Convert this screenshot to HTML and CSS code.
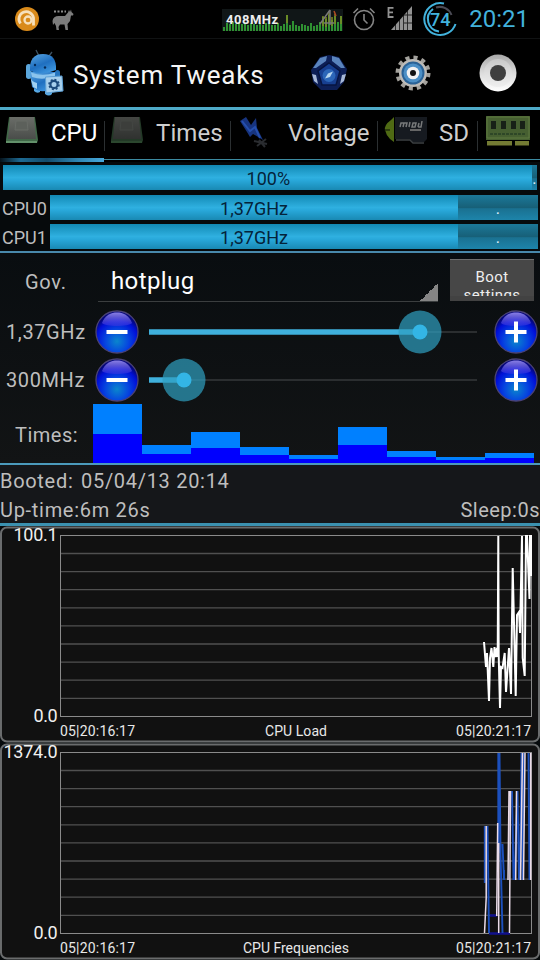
FILE: index.html
```html
<!DOCTYPE html>
<html lang="en">
<head>
  <meta charset="UTF-8">
  <meta name="viewport" content="width=device-width, initial-scale=1.0">
  <title>System Tweaks</title>
  <link rel="stylesheet" href="styles.css">
</head>
<body>

  <!-- shared gradients and the round buttons -->
  <svg class="defs" width="0" height="0">
    <defs>
      <radialGradient id="ball" cx="50%" cy="72%" r="62%">
        <stop offset="0" stop-color="#0a86cc"/>
        <stop offset="0.45" stop-color="#0645e0"/>
        <stop offset="0.8" stop-color="#0010d8"/>
        <stop offset="1" stop-color="#04067c"/>
      </radialGradient>
      <linearGradient id="shine" x1="0" y1="0" x2="0" y2="1">
        <stop offset="0" stop-color="#8a80e4"/>
        <stop offset="1" stop-color="#4038e0" stop-opacity="0.5"/>
      </linearGradient>
      <linearGradient id="robot" x1="0" y1="0" x2="0.6" y2="1">
        <stop offset="0" stop-color="#5aa6e2"/>
        <stop offset="0.6" stop-color="#1f6fc0"/>
        <stop offset="1" stop-color="#3b93dc"/>
      </linearGradient>
      <linearGradient id="silver" x1="0" y1="0" x2="0" y2="1">
        <stop offset="0" stop-color="#a8a8a8"/>
        <stop offset="0.5" stop-color="#dcdcdc"/>
        <stop offset="1" stop-color="#ffffff"/>
      </linearGradient>
      <linearGradient id="chip" x1="0" y1="0" x2="0" y2="1">
        <stop offset="0" stop-color="#6a6d68"/>
        <stop offset="1" stop-color="#4a4d4a"/>
      </linearGradient>
      <symbol id="round" viewBox="0 0 44 44">
        <circle cx="22" cy="22" r="21" fill="url(#ball)" stroke="#4a4276" stroke-width="1.3"/>
        <path d="M7 13C10 5 16 2.500 22 2.500S34 5 37 13C34 17 10 17 7 13Z" fill="url(#shine)"/>
      </symbol>
    </defs>
  </svg>

  <div class="status-bar">
    <div class="status-left">
      <svg width="24" height="24" viewBox="0 0 24 24">
        <circle cx="12" cy="12" r="12" fill="#d98a1a"/>
        <path d="M5.500 16.500A7.300 7.300 0 1 1 18.500 11V18.500" fill="none" stroke="#f6e0bc" stroke-width="2.800"/>
        <circle cx="13" cy="13" r="3.500" fill="none" stroke="#f6e0bc" stroke-width="2.300"/>
      </svg>
      <svg width="22" height="22" viewBox="0 0 22 22">
        <path d="M0.500 12C1 8 4 6.500 8 7L13 7L16 3.500L17 1L18 3L19 0.500L19.500 3L21.500 5L21 6.500H19L18 12L15.500 15L16 21H13.500L12.500 15.500H8L6.500 18L7 21H4.500L4 17L2.500 14L1 16Z" fill="#7c7c7c"/>
        <path d="M2 2.500H14" stroke="#8c8c8c" stroke-width="2" stroke-dasharray="2 1.500"/>
      </svg>
    </div>
    <div class="status-right">
      <div class="freq">
        <svg width="121" height="22" viewBox="0 0 121 22">
          <rect width="121" height="22" fill="#101617"/>
          <path d="M2 22V18M5 22V14M8 22V15M11 22V13M14 22V15M17 22V13M20 22V15M23 22V14M26 22V16M29 22V14M32 22V15M35 22V16M38 22V14M41 22V16M44 22V14M47 22V15M50 22V16M53 22V16M56 22V14M59 22V17M62 22V15M65 22V6M68 22V16M71 22V12M74 22V16M77 22V17M80 22V15M83 22V16M86 22V17M89 22V14M92 22V17M95 22V16M98 22V13M101 22V8M104 22V10M107 22V6M110 22V11M113 22V7M116 22V13M119 22V7" stroke="#2f9132" stroke-width="2"/>
          <path d="M65 14V6M101 17V7M104 18V8M107 14V2M110 17V8M113 15V5M119 15V7" stroke="#7f8a25" stroke-width="1.500"/>
          <path d="M98 15L108 1M102 14H112M108 1V16" stroke="#777" stroke-width="1.500" fill="none"/>
          <path d="M112 2L114 7" stroke="#b04a22" stroke-width="1.500"/>
        </svg>
        <span>408MHz</span>
      </div>
      <svg class="alarm" width="24" height="24" viewBox="0 0 24 24">
        <circle cx="12" cy="13" r="9.500" fill="none" stroke="#858585" stroke-width="1.600"/>
        <path d="M12 7V13L15.500 16.500M1.500 6L6 1.500M18 1.500L22.500 6" fill="none" stroke="#858585" stroke-width="1.600"/>
      </svg>
      <svg class="signal" width="26" height="25" viewBox="0 0 26 25">
        <path d="M25 0V24H4Z" fill="#929292"/>
        <path d="M8.500 10V24M12.500 8V24M16.500 6V24M20.500 0V24" stroke="#000" stroke-width="0.700"/>
        <path d="M17 9H25M17 17H25" stroke="#222" stroke-width="1"/>
        <path d="M6.500 1.800H1.500V11H6.500M1.500 6.300H6" fill="none" stroke="#929292" stroke-width="1.800"/>
      </svg>
      <div class="battery">
        <svg width="36" height="36" viewBox="0 0 36 36">
          <path d="M22 2.500A16 16 0 1 0 33.500 23" fill="none" stroke="#42b2dc" stroke-width="2"/>
          <path d="M11 8A12.500 12.500 0 0 0 17 30.500" fill="none" stroke="#42b2dc" stroke-width="2"/>
          <path d="M14 6.500A12.500 12.500 0 0 1 29.500 14" fill="none" stroke="#4b4b55" stroke-width="2"/>
        </svg>
        <span>74</span>
      </div>
      <span class="clock">20:21</span>
    </div>
  </div>

  <div class="title-bar">
    <svg width="40" height="50" viewBox="0 0 40 50">
      <path d="M14 8L11 2M24 8L27 4" stroke="#3d5363" stroke-width="1.300"/>
      <rect x="1" y="16" width="5.500" height="15" rx="2.700" fill="#5ba6dc"/>
      <rect x="30" y="22" width="5" height="12" rx="2.500" fill="#2474bc"/>
      <path d="M9 38V43Q12 46 15 44V38ZM20 38V46Q24 49 27 46V38Z" fill="#58a9e4"/>
      <path d="M5 24H31V38Q18 48 7 39Z" fill="url(#robot)"/>
      <path d="M5 23Q4 6 18 6T31 22Q18 28 5 23Z" fill="url(#robot)"/>
      <path d="M6 24.500Q18 29 30 24.500V28Q18 33 7 29Z" fill="#8cc4ec"/>
      <path d="M5.500 30Q7 34 12 35V41L8 39Z" fill="#9fd0f2"/>
      <circle cx="10" cy="17" r="1.200" fill="#052a58"/><circle cx="20" cy="19.500" r="1.200" fill="#052a58"/>
      <path d="M20.500 29L37 28L38 43L21 45Z" fill="#a6cfec" stroke="#5c9fd4"/>
      <circle cx="29" cy="36.500" r="3.600" fill="none" stroke="#1b4a7c" stroke-width="2.200"/>
      <circle cx="29" cy="36.500" r="5" fill="none" stroke="#1b4a7c" stroke-width="1.500" stroke-dasharray="2 1.900"/>
    </svg>
    <h1>System Tweaks</h1>
    <div class="actions">
      <svg width="36" height="36" viewBox="0 0 36 36">
        <path d="M9 2L18 0L28 2L36 14L33 27L26 35H10L2 27L0 15Z" fill="#0d1f56"/>
        <path d="M2 13L9 3L16 1L15 6L5 13ZM21 1L28 3L34 13L30 13L21 6Z" fill="#5a84bd"/>
        <path d="M1 19L5 20L7 29L3 26ZM35 19L31 20L29 29L33 26Z" fill="#a6b7d6"/>
        <path d="M18 8L29 16L25 30H11L7 16Z" fill="#173f90" stroke="#071540" stroke-width="1.500"/>
        <circle cx="18" cy="20.500" r="6.500" fill="#2b66b8"/>
        <path d="M14 23.500L17 18.500L22 16.500L19 22Z" fill="#b4d4ee"/>
      </svg>
      <svg width="36" height="36" viewBox="0 0 36 36">
        <circle cx="18" cy="18" r="15.500" fill="none" stroke="#a3a19c" stroke-width="4" stroke-dasharray="4.100 4.015"/>
        <circle cx="18" cy="18" r="14" fill="#bdbbb7"/>
        <circle cx="18" cy="18" r="11.500" fill="#2a6296"/>
        <circle cx="18" cy="18" r="9.500" fill="#4b8fc6"/>
        <circle cx="18" cy="18" r="6.300" fill="#f2f2f2"/>
        <circle cx="18" cy="18" r="3" fill="#111"/>
      </svg>
      <svg width="38" height="38" viewBox="0 0 38 38">
        <circle cx="19" cy="19" r="18.500" fill="url(#silver)"/>
        <circle cx="19" cy="19" r="14" fill="#e4e4e4" opacity="0.400"/>
        <circle cx="19" cy="19" r="8" fill="#3f3f3f"/>
      </svg>
    </div>
  </div>

  <div class="tabs">
    <div class="tab tab-cpu active">
      <svg width="34" height="28" viewBox="0 0 34 28">
        <path d="M4 1H30L33 24L32 27H1V24Z" fill="#416848"/>
        <path d="M5 1H29L31 23H3Z" fill="url(#chip)"/>
        <path d="M11 5H22L23 14H10Z" fill="#5c605b" stroke="#686c67" stroke-width="1"/>
        <path d="M1 26H32" stroke="#6f9f76" stroke-width="1.500"/>
      </svg>
      <span>CPU</span>
    </div>
    <div class="tab tab-times">
      <svg width="34" height="28" viewBox="0 0 34 28" opacity="0.650">
        <path d="M4 1H30L33 24L32 27H1V24Z" fill="#37583c"/>
        <path d="M5 1H29L31 23H3Z" fill="url(#chip)"/>
        <path d="M11 5H22L23 14H10Z" fill="#5c605b" stroke="#686c67" stroke-width="1"/>
        <path d="M1 26H32" stroke="#48744c" stroke-width="1.500"/>
      </svg>
      <span>Times</span>
    </div>
    <div class="tab tab-voltage">
      <svg width="34" height="34" viewBox="0 0 34 34">
        <path d="M1 5L7 1L12 9L17 2L18 12L24 24L14 18L11 21L8 16Z" fill="#17347f"/>
        <path d="M3 5L11 15L16 11L21 22" fill="none" stroke="#254fae" stroke-width="2"/>
        <path d="M15 25L28 28M18 30L27 23M20 24L26 31" stroke="#2a2c30" stroke-width="2"/>
      </svg>
      <span>Voltage</span>
    </div>
    <div class="tab tab-sd">
      <svg width="44" height="28" viewBox="0 0 44 28">
        <path d="M10 1L7 4Q0 9 1 14T6 23L10 26Z" fill="#4f6a14"/>
        <path d="M0 14H6" stroke="#0b1003"/>
        <path d="M11 1H43V23L40 26H29L26 23H11Z" fill="#161a20"/>
        <path d="M12 24H26L29 27H40" fill="none" stroke="#3c4043" stroke-width="1.500"/>
        <path d="M16 11L17 7H20L19 11M20 7H23L22 11M26 6L25 11M29 7H32L31 11H28ZM35 7L34 11M38 5L37 11H34" fill="none" stroke="#77797a" stroke-width="1.500"/>
        <path d="M26 14H37" stroke="#666" stroke-width="2"/>
      </svg>
      <span>SD</span>
    </div>
    <div class="tab tab-ram">
      <svg width="44" height="30" viewBox="0 0 44 30">
        <rect width="44" height="24" fill="#465f31"/>
        <path d="M1 1H43V22H1Z" fill="none" stroke="#5f7a41"/>
        <path d="M5 5H10V13H5ZM15 5H20V13H15ZM25 5H30V13H25ZM34 5H39V13H34Z" fill="#182117"/>
        <path d="M4 18H40" stroke="#2e4727" stroke-width="2" stroke-dasharray="3 1"/>
        <path d="M1 25H26V29.500H1ZM29 25H43V29.500H29Z" fill="#747b33"/>
      </svg>
    </div>
  </div>

  <div class="bars">
    <div class="load bar"><div class="fill" style="width: 99%">100%</div><div class="rest">.</div></div>
    <div class="core"><label>CPU0</label><div class="bar"><div class="fill" style="width: 83.600%">1,37GHz</div><div class="rest">.</div></div></div>
    <div class="core"><label>CPU1</label><div class="bar"><div class="fill" style="width: 83.600%">1,37GHz</div><div class="rest">.</div></div></div>
  </div>

  <div class="settings">
    <div class="gov">
      <label>Gov.</label>
      <div class="spinner">hotplug</div>
      <button class="boot">Boot<br>settings</button>
    </div>
    <div class="freq-row">
      <label>1,37GHz</label>
      <svg class="round" viewBox="0 0 44 44"><use href="#round"/><path d="M11.500 22H32.500" stroke="#fff" stroke-width="4"/></svg>
      <svg class="slider" viewBox="0 0 340 44">
        <path d="M0 22H328" stroke="#2b2e30" stroke-width="2"/>
        <path d="M0 22H271" stroke="#3fb0dc" stroke-width="5.500"/>
        <circle cx="271" cy="22" r="21.500" fill="#2f9fc0" fill-opacity="0.700"/>
        <circle cx="271" cy="22" r="7.500" fill="#33b5e5"/>
      </svg>
      <svg class="round" viewBox="0 0 44 44"><use href="#round"/><path d="M11.500 22H32.500M22 11.500V32.500" stroke="#fff" stroke-width="4"/></svg>
    </div>
    <div class="freq-row">
      <label>300MHz</label>
      <svg class="round" viewBox="0 0 44 44"><use href="#round"/><path d="M11.500 22H32.500" stroke="#fff" stroke-width="4"/></svg>
      <svg class="slider" viewBox="0 0 340 44">
        <path d="M0 22H328" stroke="#2b2e30" stroke-width="2"/>
        <path d="M0 22H35" stroke="#3fb0dc" stroke-width="5.500"/>
        <circle cx="35" cy="22" r="21.500" fill="#2f9fc0" fill-opacity="0.700"/>
        <circle cx="35" cy="22" r="7.500" fill="#33b5e5"/>
      </svg>
      <svg class="round" viewBox="0 0 44 44"><use href="#round"/><path d="M11.500 22H32.500M22 11.500V32.500" stroke="#fff" stroke-width="4"/></svg>
    </div>
    <div class="times">
      <label>Times:</label>
      <div class="columns">
        <div style="height: 59px"><i style="height: 29px"></i></div>
        <div style="height: 18px"><i style="height: 9px"></i></div>
        <div style="height: 31px"><i style="height: 15px"></i></div>
        <div style="height: 16px"><i style="height: 8px"></i></div>
        <div style="height: 8px"><i style="height: 4px"></i></div>
        <div style="height: 36px"><i style="height: 18px"></i></div>
        <div style="height: 12px"><i style="height: 6px"></i></div>
        <div style="height: 6px"><i style="height: 3px"></i></div>
        <div style="height: 10px"><i style="height: 5px"></i></div>
      </div>
    </div>
  </div>

  <div class="uptime">
    <p><span class="booted">Booted:</span><span class="date">05/04/13 20:14</span></p>
    <p><span class="up">Up-time:6m 26s</span><span class="sleep">Sleep:0s</span></p>
  </div>

  <svg class="chart" viewBox="0 0 540 217">
    <rect x="1" y="1.500" width="538" height="214" rx="6" fill="#111" stroke="#6a6c6d" stroke-width="2"/>
    <path d="M60 27.500H531M60 45.600H531M60 63.700H531M60 81.800H531M60 99.900H531M60 118H531M60 136.100H531M60 154.200H531M60 172.300H531" stroke="#505050" stroke-width="1.300"/>
    <rect x="60.500" y="9.500" width="471" height="181" fill="none" stroke="#8a8a8a"/>
    <path d="M484 116L486 141L487 127L489 175L490 132L491.500 122L493.300 141L494.500 121L495.700 131L497 122L497.700 131L498.300 10L498.700 129L500 182L501 141L502.500 142L504.700 127L506 166L509 122L511 168L512.700 42L515.700 170L517 89L519 86L520 107L522 10L522.700 132L524.700 150L526 10H527L529.500 73L530 10L531 10V50" fill="none" stroke="#fff" stroke-width="2"/>
    <text class="axis" x="57.500" y="14.500" text-anchor="end" textLength="44">100.1</text>
    <text class="axis" x="57.500" y="195.500" text-anchor="end" textLength="24">0.0</text>
    <text class="tick" x="60" y="210" textLength="75">05|20:16:17</text>
    <text class="tick" x="265" y="210" textLength="62">CPU Load</text>
    <text class="tick" x="456" y="210" textLength="75">05|20:21:17</text>
  </svg>

  <svg class="chart" viewBox="0 0 540 217">
    <rect x="1" y="1.500" width="538" height="214" rx="6" fill="#111" stroke="#6a6c6d" stroke-width="2"/>
    <path d="M60 27.500H531M60 45.600H531M60 63.700H531M60 81.800H531M60 99.900H531M60 118H531M60 136.100H531M60 154.200H531M60 172.300H531" stroke="#505050" stroke-width="1.300"/>
    <rect x="60.500" y="9.500" width="471" height="181" fill="none" stroke="#8a8a8a"/>
    <path d="M490 172.500H497M489 190.500H510" stroke="#10108c" stroke-width="2.500"/>
    <path d="M484.800 83V140M487.500 83L489 190M498.300 10V110M499.500 10L500.500 110L502.500 190M502.500 101L504 137M504 127V137M512 48L513.500 137M517.500 48L514.500 137M517.500 48L519 137M521.500 10L520 137M523.500 10L522.500 137M528.500 10L529.500 137" fill="none" stroke="#1c50bd" stroke-width="1.900"/>
    <path d="M484.500 190L486.200 155V83M496.700 173L497.700 80M498.700 190V100M509 48L508 137M510.500 48L509.500 190M516.500 48L515.700 137M522.500 10L520.500 137M525 10L523.500 137M530.700 10V137" fill="none" stroke="#eadbe8" stroke-width="1.500"/>
    <text class="axis" x="57.500" y="14.500" text-anchor="end" textLength="54">1374.0</text>
    <text class="axis" x="57.500" y="195.500" text-anchor="end" textLength="24">0.0</text>
    <text class="tick" x="60" y="210" textLength="75">05|20:16:17</text>
    <text class="tick" x="243" y="210" textLength="106">CPU Frequencies</text>
    <text class="tick" x="456" y="210" textLength="75">05|20:21:17</text>
  </svg>

</body>
</html>
```

FILE: styles.css
```css
* {
  box-sizing: border-box;
}

body {
  margin: 0;
  width: 540px;
  height: 960px;
  overflow: hidden;
  background-color: #060a0c;
  color: #bebebe;
  font-family: Roboto, "Liberation Sans", sans-serif;
  font-size: 20px;
}

svg {
  display: block;
  flex: none;
}

.defs {
  position: absolute;
}

/* status bar */
.status-bar {
  display: flex;
  justify-content: space-between;
  height: 39px;
  padding: 0 11px 0 15px;
  background-color: #000;
  border-bottom: 1px solid #101213;
}

.status-left {
  display: flex;
  gap: 13px;
  padding-top: 7px;
}

.status-left svg + svg {
  margin-top: 2px;
}

.status-right {
  display: flex;
  align-items: center;
}

.freq {
  position: relative;
  margin-right: 1px;
  padding-top: 1px;
}

.freq span {
  position: absolute;
  left: 4px;
  top: 4px;
  color: #eee;
  font-size: 13px;
  font-weight: bold;
  line-height: 16px;
  letter-spacing: 0.5px;
}

.alarm {
  margin-left: 8px;
}

.signal {
  margin: -2px 0 0 11px;
}

.battery {
  position: relative;
  margin: -1px 0 0 9px;
}

.battery span {
  position: absolute;
  left: 8px;
  top: 9px;
  color: #42b2dc;
  font-size: 18px;
  font-weight: 500;
  line-height: 20px;
}

.clock {
  margin-left: 11px;
  color: #42b2dc;
  font-size: 24px;
  width: 60px;
  text-align: right;
  white-space: nowrap;
}

/* title */
.title-bar {
  display: flex;
  align-items: center;
  height: 71px;
  padding: 0 23px 0 25px;
  background-color: #000;
  border-bottom: 3px solid #4fabc9;
}

.title-bar h1 {
  margin: 3px 0 0 8px;
  color: #f5f5f5;
  font-size: 26px;
  font-weight: normal;
  letter-spacing: 0.8px;
}

.actions {
  display: flex;
  align-items: center;
  gap: 48px;
  margin-left: auto;
}

/* tabs */
.tabs {
  display: flex;
  height: 52px;
  background-color: #000;
}

.tab {
  display: flex;
  height: 50px;
  padding-top: 6px;
  border-bottom: 1px solid #3c8aa0;
  color: #cecece;
  font-size: 24px;
  line-height: 34px;
  white-space: nowrap;
}

.tab + .tab {
  background: linear-gradient(#2b2f31, #2b2f31) left 11px / 1px 30px no-repeat;
  background-position: 0 11px;
}

.tab-cpu {
  width: 104px;
  height: 52px;
  padding-left: 5px;
  background: linear-gradient(90deg, #06121a, #1d6a93 20%, #134c6c 45%, #2e86b4 75%, #48a9dc) left bottom / 104px 4px no-repeat;
  border-bottom: 0;
  color: #fff;
}

.tab-cpu span {
  margin-left: 12px;
}

.tab-times {
  width: 126px;
  padding-left: 6px;
}

.tab-times span {
  margin-left: 12px;
  letter-spacing: 0.1px;
}

.tab-voltage {
  width: 147px;
  padding-left: 9px;
}

.tab-voltage span {
  margin-left: 15px;
}

.tab-sd {
  width: 100px;
  padding-left: 7px;
}

.tab-sd span {
  margin-left: 11px;
}

.tab-ram {
  width: 63px;
  padding-left: 9px;
}

/* load bars */
.bars {
  height: 91px;
  padding-top: 3px;
  border-bottom: 2px solid #4888ab;
}

.bar {
  display: flex;
  height: 25px;
  background: linear-gradient(#1c7899, #176078 50%, #1a7191 55%, #1d84aa);
  line-height: 27px;
  text-align: center;
}

.load {
  width: 534px;
  margin: 0 0 5px 3px;
}

.fill {
  background: linear-gradient(#1289b4, #2fb0e0 50%, #29a9db 60%, #1989b3);
  color: #04233a;
  font-size: 18px;
}

.load .fill {
  padding-left: 2px;
}

.rest {
  flex: 1;
  color: #e4f4fa;
  font-size: 16px;
}

.core {
  display: flex;
  height: 29px;
  line-height: 28px;
}

.core label {
  width: 50px;
  padding-left: 2px;
  font-size: 18px;
}

.core .bar {
  width: 488px;
}

/* governor and frequencies */
.settings {
  height: 212px;
  background: linear-gradient(#090d10, #121415);
  border-bottom: 2px solid #4b9abc;
}

.gov {
  display: flex;
  height: 55px;
  padding-top: 6px;
}

.gov label {
  width: 98px;
  padding-left: 25px;
  line-height: 46px;
  letter-spacing: 0.7px;
}

.spinner {
  width: 340px;
  height: 43px;
  padding-left: 13px;
  color: #fff;
  font-size: 24px;
  line-height: 44px;
  letter-spacing: 0.4px;
  background: linear-gradient(135deg, transparent 50%, #858585 50%) right bottom / 18px 18px no-repeat;
  border-bottom: 1px solid #3b3e3f;
}

.boot {
  width: 84px;
  height: 42px;
  margin-left: 12px;
  padding: 8px 0 0;
  overflow: hidden;
  background-color: #474747;
  border: 0;
  border-top: 1px solid #6e6e6e;
  border-bottom: 5px solid #424242;
  color: #eee;
  font-family: inherit;
  font-size: 15px;
  line-height: 18px;
  letter-spacing: 0.4px;
  display: block;
}

.freq-row {
  display: flex;
  align-items: center;
  height: 48px;
}

.freq-row label {
  width: 95px;
  padding-left: 6px;
  letter-spacing: 0.6px;
  white-space: nowrap;
}

.round {
  width: 44px;
  height: 44px;
}

.slider {
  width: 340px;
  height: 44px;
  margin: 0 5px 0 10px;
}

.times {
  display: flex;
  height: 59px;
}

.times label {
  width: 93px;
  padding-left: 15px;
  line-height: 62px;
  letter-spacing: 0.5px;
}

.columns {
  display: flex;
  align-items: flex-end;
}

.columns div {
  display: flex;
  align-items: flex-end;
  width: 49px;
  background-color: #0080ff;
}

.columns i {
  width: 100%;
  background-color: #0000fe;
}

/* boot time */
.uptime {
  height: 61px;
  padding-top: 1px;
  background-color: #15171a;
  border-bottom: 3px solid #3b91b0;
}

.uptime p {
  display: flex;
  height: 29px;
  margin: 0;
  line-height: 30px;
  letter-spacing: 0.7px;
  white-space: nowrap;
}

.booted {
  width: 81px;
}

.sleep {
  margin-left: auto;
  letter-spacing: 0.5px;
}

/* history charts */
.chart {
  width: 540px;
  height: 217px;
  overflow: visible;
}

.axis {
  fill: #f0f0f0;
  font-size: 18px;
}

.tick {
  fill: #e8e8e8;
  font-size: 14px;
}
```
